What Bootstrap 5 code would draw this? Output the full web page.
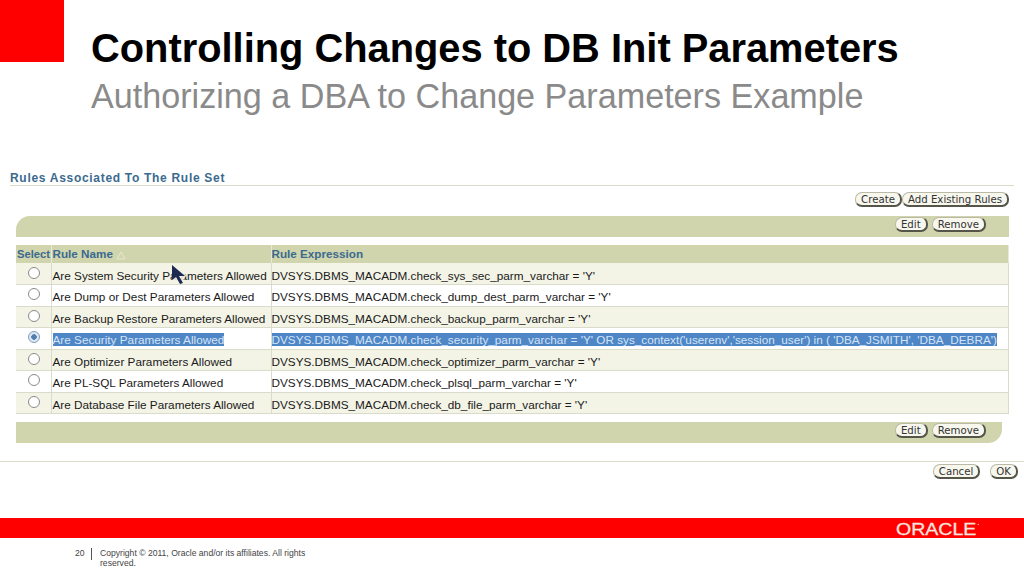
<!DOCTYPE html>
<html lang="en">
<head>
  <meta charset="UTF-8">
  <meta name="viewport" content="width=device-width, initial-scale=1.0">
  <title>Controlling Changes to DB Init Parameters</title>
  <link rel="stylesheet" href="https://cdn.jsdelivr.net/npm/bootstrap@5.3.0/dist/css/bootstrap.min.css">
  <style>
    body { width: 1024px; height: 576px; overflow: hidden; background: #fff; font-family: "Liberation Sans", Arial, sans-serif; position: relative; }
    .slide-head { height: 136px; }
    .red-square { width: 64px; height: 62px; background: #ff0000; }
    .head-text { padding: 28px 0 0 27px; }
    .slide-title { font-size: 39.85px; line-height: 40px; font-weight: 700; color: #000; margin: 0; white-space: nowrap; }
    .slide-sub { font-size: 34.15px; line-height: 38px; color: #8a8a8a; margin: 9px 0 0; white-space: nowrap; }
    .shot { padding: 0 10px; height: 382px; }
    .sect-title { font-size: 12px; line-height: 14px; font-weight: 700; color: #3b6a8f; letter-spacing: .7px; padding-top: 35px; border-bottom: 1px solid #d9dccb; height: 50px; }
    .btn-row { height: 30px; padding: 6px 5px 0 0; }
    .ui-btn { font-family: "DejaVu Sans", sans-serif; font-size: 10.2px; line-height: 13px; height: 15px; padding: 0 5px; color: #333; background: #f7f7ee; border: 1px solid #b9b9a6; border-right: 2px solid #55554a; border-bottom: 2px solid #55554a; border-radius: 7px; }
    .tool-bar { background: #d0d5ad; height: 21px; margin-left: 6px; padding-top: 1px; }
    .tool-top { width: 993px; border-top-left-radius: 14px; padding-right: 23px; }
    .tool-bot { width: 986px; border-bottom-right-radius: 14px; margin-top: 8px; padding-right: 16px; }
    .rule-grid { width: 993px; margin: 8px 0 0 6px; table-layout: fixed; border-collapse: collapse; font-size: 11.75px; color: #1a1a1a; }
    .rule-grid th { background: #d0d5ad; color: #3b6a8f; font-weight: 700; font-size: 11.7px; height: 18px; padding: 0 0 0 1px; border-right: 1px solid #e8ead6; white-space: nowrap; }
    .rule-grid th.pick-head { font-size: 11.2px; }
    .rule-grid td { height: 21.5px; padding: 3px 0 0 1px; line-height: 17px; white-space: nowrap; border-right: 1px solid #d9dccb; border-bottom: 1px solid #d9dccb; background: #fff; }
    .rule-grid th:last-child, .rule-grid td:last-child { padding-left: 0; }
    .rule-grid tr.alt td { background: #f3f4e6; }
    .pick-dot { display: block; width: 12px; height: 12px; border-radius: 50%; border: 1px solid #8a8a8a; background: #fff; margin: -5px 0 0 11px; }
    .pick-dot.on { border-color: #7f9fbf; background: radial-gradient(circle, #4f7fae 0 2.5px, #dfe8f2 3px); }
    .sel-text { background: #4f86c6; color: #d3e4f7; }
    .foot-row { border-top: 1px solid #d9dccb; margin: 18px -10px 0; padding: 2px 6px 0 0; gap: 10px; }
    .red-bar { background: #ff0000; height: 20px; padding-left: 896px; }
    .oracle-word { color: #f6e4df; font-size: 17px; line-height: 19px; font-weight: 400; display: inline-block; -webkit-text-stroke: .3px #f6e4df; transform: scaleX(1.15); transform-origin: left; position: relative; }
    .oracle-word::after { content: ""; position: absolute; left: 70.5px; top: 4px; width: 1px; height: 1px; background: #f6e4df; }
    .slide-foot { font-size: 8.6px; line-height: 10px; color: #444; padding: 10px 0 0 75px; }
    .page-no { width: 17px; border-right: 1px solid #555; height: 12px; margin-right: 8px; }
    .copy-text { width: 220px; }
    .mouse-arrow { position: absolute; left: 167px; top: 262px; }
  </style>
</head>
<body>
  <div class="slide-head d-flex">
    <div class="red-square flex-shrink-0"></div>
    <div class="head-text">
      <h1 class="slide-title">Controlling Changes to DB Init Parameters</h1>
      <p class="slide-sub">Authorizing a DBA to Change Parameters Example</p>
    </div>
  </div>

  <div class="shot">
    <div class="sect-title">Rules Associated To The Rule Set</div>
    <div class="btn-row d-flex justify-content-end">
      <button class="btn ui-btn">Create</button>
      <button class="btn ui-btn">Add Existing Rules</button>
    </div>
    <div class="tool-bar tool-top d-flex justify-content-end align-items-start gap-1">
      <button class="btn ui-btn">Edit</button>
      <button class="btn ui-btn">Remove</button>
    </div>
    <table class="rule-grid">
      <colgroup><col style="width:35px"><col style="width:220px"><col></colgroup>
      <thead>
        <tr><th class="pick-head">Select</th><th>Rule Name <svg width="10" height="9" viewBox="0 0 10 9"><path d="M5 1 9 8H1z" fill="none" stroke="#e6e8cf"/></svg></th><th>Rule Expression</th></tr>
      </thead>
      <tbody>
        <tr class="alt"><td><span class="pick-dot"></span></td><td>Are System Security Parameters Allowed</td><td>DVSYS.DBMS_MACADM.check_sys_sec_parm_varchar = 'Y'</td></tr>
        <tr><td><span class="pick-dot"></span></td><td>Are Dump or Dest Parameters Allowed</td><td>DVSYS.DBMS_MACADM.check_dump_dest_parm_varchar = 'Y'</td></tr>
        <tr class="alt"><td><span class="pick-dot"></span></td><td>Are Backup Restore Parameters Allowed</td><td>DVSYS.DBMS_MACADM.check_backup_parm_varchar = 'Y'</td></tr>
        <tr><td><span class="pick-dot on"></span></td><td><span class="sel-text">Are Security Parameters Allowed</span></td><td><span class="sel-text">DVSYS.DBMS_MACADM.check_security_parm_varchar = 'Y' OR sys_context('userenv','session_user') in ( 'DBA_JSMITH', 'DBA_DEBRA')</span></td></tr>
        <tr class="alt"><td><span class="pick-dot"></span></td><td>Are Optimizer Parameters Allowed</td><td>DVSYS.DBMS_MACADM.check_optimizer_parm_varchar = 'Y'</td></tr>
        <tr><td><span class="pick-dot"></span></td><td>Are PL-SQL Parameters Allowed</td><td>DVSYS.DBMS_MACADM.check_plsql_parm_varchar = 'Y'</td></tr>
        <tr class="alt"><td><span class="pick-dot"></span></td><td>Are Database File Parameters Allowed</td><td>DVSYS.DBMS_MACADM.check_db_file_parm_varchar = 'Y'</td></tr>
      </tbody>
    </table>
    <div class="tool-bar tool-bot d-flex justify-content-end align-items-start gap-1">
      <button class="btn ui-btn">Edit</button>
      <button class="btn ui-btn">Remove</button>
    </div>
    <div class="foot-row d-flex justify-content-end">
      <button class="btn ui-btn">Cancel</button>
      <button class="btn ui-btn">OK</button>
    </div>
  </div>

  <div class="red-bar"><span class="oracle-word">ORACLE</span></div>
  <div class="slide-foot d-flex">
    <div class="page-no">20</div>
    <div class="copy-text">Copyright © 2011, Oracle and/or its affiliates. All rights reserved.</div>
  </div>

  <svg class="mouse-arrow" width="24" height="24" viewBox="0 0 24 24"><path d="M5 2h3l12 12-4 2 3 6h-5l-3-4-6 1z" fill="#f3f4e6" opacity=".85"/><path d="M5 3v15l4-3 4 7 3-1-4-7h6z" fill="#1d2a52"/></svg>
</body>
</html>
